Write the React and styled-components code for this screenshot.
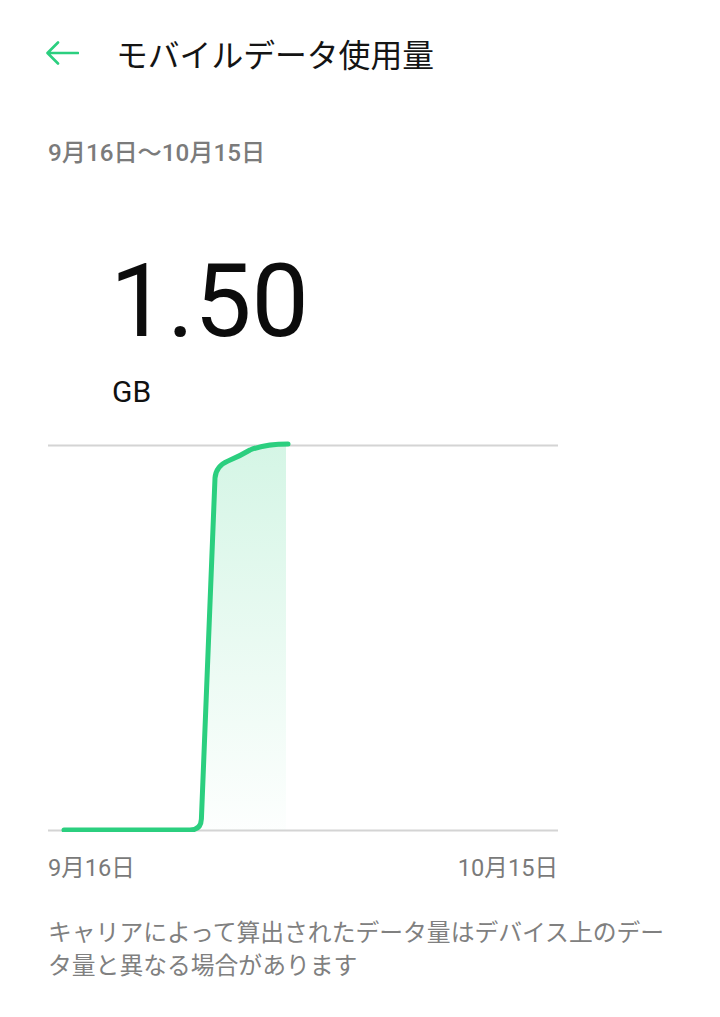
import React from "react";
import styled, { createGlobalStyle } from "styled-components";

const GlobalStyle = createGlobalStyle`
  html, body {
    margin: 0;
    padding: 0;
    background: #ffffff;
  }
  body {
    font-family: "Roboto", "Noto Sans CJK JP", sans-serif;
    -webkit-font-smoothing: antialiased;
  }
`;

const GREEN = "#2bcf7f";

const Page = styled.div`
  width: 720px;
  min-height: 1017px;
  background: #fff;
  display: flex;
  flex-direction: column;
`;

const Header = styled.div`
  height: 106px;
  display: flex;
  align-items: center;
  padding-left: 45px;
  gap: 37px;
`;

const BackButton = styled.button`
  border: 0;
  background: none;
  padding: 0;
  width: 34px;
  height: 26px;
  display: flex;
  align-items: center;
  cursor: pointer;
`;

const Title = styled.h1`
  margin: 0;
  font-family: "Noto Sans CJK JP", sans-serif;
  font-weight: 400;
  font-size: 31.8px;
  line-height: 40px;
  color: #141414;
`;

const Period = styled.div`
  margin: 32px 0 0 48px;
  font-family: "Roboto", "Noto Sans CJK JP", sans-serif;
  font-weight: 500;
  font-size: 24.2px;
  line-height: 30px;
  color: #7b7b7b;
`;

const Amount = styled.div`
  margin: 82px 0 0 110px;
  font-family: "Roboto", sans-serif;
  font-weight: 400;
  font-size: 102px;
  line-height: 102px;
  color: #0c0c0c;
`;

const Unit = styled.div`
  margin: 22px 0 0 112px;
  font-family: "Roboto", sans-serif;
  font-size: 30px;
  line-height: 36px;
  color: #111;
`;

const Chart = styled.svg`
  display: block;
  margin: 30px 0 0 48px;
  width: 510px;
  height: 392px;
`;

const AxisRow = styled.div`
  margin: 21px 0 0 48px;
  width: 510px;
  display: flex;
  justify-content: space-between;
`;

const AxisLabel = styled.span`
  font-family: "Roboto", "Noto Sans CJK JP", sans-serif;
  font-size: 23.6px;
  line-height: 30px;
  color: #7a7a7a;
`;

const Note = styled.p`
  margin: 31px 48px 0 48px;
  font-family: "Noto Sans CJK JP", sans-serif;
  font-size: 23.8px;
  line-height: 33px;
  color: #808080;
`;

const BackArrow = () => (
  <svg width="34" height="26" viewBox="0 0 34 26">
    <path
      d="M33 13 H3 M13 2.5 L2.5 13 L13 23.5"
      fill="none"
      stroke={GREEN}
      strokeWidth="2.6"
      strokeLinecap="round"
      strokeLinejoin="round"
    />
  </svg>
);

const linePath =
  "M16 390 L142 390 Q153 390 153.4 379 L167 38 Q168 26 180 21 Q192 16 202 10 Q217 4 240 4";
const fillPath =
  "M153.4 390 L153.4 379 L167 38 Q168 26 180 21 Q192 16 202 10 Q217 4 238 4 L238 390 Z";

const UsageChart = () => (
  <Chart viewBox="0 0 510 392">
    <defs>
      <linearGradient id="usageFill" x1="0" y1="0" x2="0" y2="1">
        <stop offset="0" stopColor={GREEN} stopOpacity="0.2" />
        <stop offset="1" stopColor={GREEN} stopOpacity="0.01" />
      </linearGradient>
    </defs>
    <line x1="0" y1="5.5" x2="510" y2="5.5" stroke="#d4d4d4" strokeWidth="2" />
    <line x1="0" y1="390.5" x2="510" y2="390.5" stroke="#d4d4d4" strokeWidth="2" />
    <path d={fillPath} fill="url(#usageFill)" />
    <path
      d={linePath}
      fill="none"
      stroke={GREEN}
      strokeWidth="5"
      strokeLinecap="round"
      strokeLinejoin="round"
    />
  </Chart>
);

export default function App() {
  return (
    <Page>
      <GlobalStyle />
      <Header>
        <BackButton aria-label="戻る">
          <BackArrow />
        </BackButton>
        <Title>モバイルデータ使用量</Title>
      </Header>
      <Period>9月16日〜10月15日</Period>
      <Amount>1.50</Amount>
      <Unit>GB</Unit>
      <UsageChart />
      <AxisRow>
        <AxisLabel>9月16日</AxisLabel>
        <AxisLabel>10月15日</AxisLabel>
      </AxisRow>
      <Note>キャリアによって算出されたデータ量はデバイス上のデータ量と異なる場合があります</Note>
    </Page>
  );
}
